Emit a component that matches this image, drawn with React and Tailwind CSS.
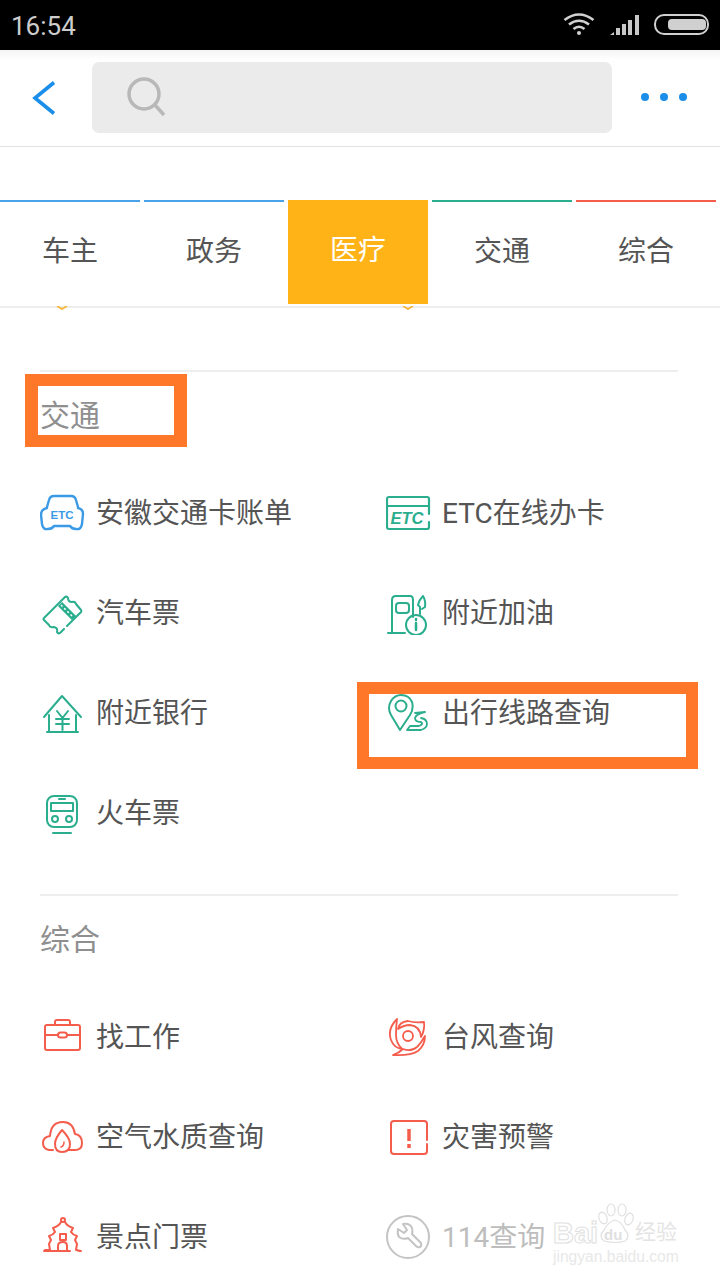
import React from "react";

const font = { fontFamily: '"Roboto","Noto Sans CJK SC",sans-serif' };

function I({ children, c, w = 2 }) {
  return (
    <svg width="46" height="46" viewBox="0 0 46 46" fill="none" stroke={c} strokeWidth={w} strokeLinecap="round" strokeLinejoin="round" className="shrink-0">
      {children}
    </svg>
  );
}

const BLUE = "#3a9ae6", GREEN = "#2bae8e", RED = "#f45d4c", GRAY = "#c4c4c4";

const CarIcon = () => (
  <I c={BLUE} w={2.4}>
    <path d="M7 18 L9 11 Q10 7 14 7 H31 Q35 7 36 11 L38 18 M38 19 Q43 20 43 25 L42 35 Q41 41 36 40 Q32 40 30 37 H14 Q12 40 8 40 Q3 41 2 35 L1 26 Q1 20 7 19" />
    <text x="22" y="30" textAnchor="middle" fontSize="11.5" fontWeight="700" fill={BLUE} stroke="none" fontFamily="Liberation Sans">ETC</text>
  </I>
);
const TicketIcon = () => (
  <I c={GREEN}>
    <path d="M27 37 L40 24 Q42 23 41 21 L36 15 Q35 12 32 13 Q28 13 28 9 Q27 7 25 8 L4 29 Q3 30 4 31 L9 36 Q10 39 14 38 Q18 39 17 43 Q18 45 20 44 L24 40" />
    <path d="M20 15 L34 29" strokeWidth="6" strokeLinecap="butt" />
    <path d="M21 16 L33 28" stroke="#fff" strokeWidth="1.5" strokeLinecap="butt" strokeDasharray="2 2.5" />
  </I>
);
const HouseIcon = () => (
  <I c={GREEN}>
    <path d="M4 28 L22 7 L41 28 M9 26 V42 M36 26 V42 M7 43 H38" />
    <path d="M17 22 L22.5 29 L28 22 M16 30 H29 M16 35 H29 M22.5 29 V41" />
  </I>
);
const TrainIcon = () => (
  <I c={GREEN}>
    <rect x="7" y="7" width="30" height="31" rx="7" />
    <rect x="11" y="14" width="22" height="8" />
    <path d="M19 10 H25 M13 44 H31" />
    <circle cx="15" cy="30" r="3" />
    <circle cx="29" cy="30" r="3" />
  </I>
);
const CardIcon = () => (
  <I c={GREEN} w={2.2}>
    <path d="M43 33 V38 Q43 40 41 40 H3 Q1 40 1 38 V10 Q1 8 3 8 H41 Q43 8 43 10 V25 M1 17 H43" />
    <text x="21" y="34.5" textAnchor="middle" fontSize="16.5" fontWeight="700" fontStyle="italic" fill={GREEN} stroke="none" fontFamily="Liberation Sans">ETC</text>
  </I>
);
const GasIcon = () => (
  <I c={GREEN}>
    <path d="M6 44 V11 Q6 7 10 7 H24 Q27 7 27 11 V28 M2 44 H19" />
    <rect x="10" y="14" width="13" height="10" rx="3" />
    <circle cx="30" cy="36" r="10" />
    <path d="M30 34 V41" strokeWidth="2.5" />
    <path d="M30 30 V31" strokeWidth="2.5" />
    <path d="M34 25 V18 L32 16 Q33 11 37 7 Q40 12 39 18 L36 20" />
  </I>
);
const MapIcon = () => (
  <I c={GREEN}>
    <path d="M14 41 L5 26 Q1 19 5 12 Q9 6 15 6 Q23 6 26 13 Q28 20 24 26 L14 41 Z" />
    <circle cx="15" cy="17" r="5.5" />
    <path d="M29 24 L39 23 Q30 25 29 29 Q29 33 35 33 Q38 35 33 37 L24 37 L21 41 H35 Q41 39 41 35 Q41 30 35 29" strokeWidth="1.8" />
  </I>
);
const CaseIcon = () => (
  <I c={RED}>
    <rect x="5" y="12" width="35" height="25" rx="2" />
    <path d="M15 12 V9 Q15 7 17 7 H28 Q30 7 30 9 V12 M5 22 H18 M27 22 H40" />
    <rect x="18" y="19.5" width="9" height="5" rx="2.5" />
  </I>
);
const CloudIcon = () => (
  <I c={RED}>
    <path d="M13 37 H9 Q3 36 3 30 Q3 24 10 23 Q11 9 23 9 Q33 9 35 21 Q42 22 42 30 Q42 37 35 37 H28" />
    <path d="M22 17 Q30 25 30 31 Q30 39 22 39 Q15 39 15 31 Q15 25 22 17 Z" />
    <path d="M24 29 Q24 33 21 34" strokeWidth="1.5" />
  </I>
);
const TempleIcon = () => (
  <I c={RED}>
    <circle cx="23" cy="7" r="2" />
    <path d="M21 9 Q19 13 13 15 L15 19 Q13 22 9 23 L11 27 L9 31 L10 37 H5 M25 9 Q27 13 33 15 L31 19 Q33 22 37 23 L35 27 L37 31 L36 37 L41 38 H38 M4 38 H30" />
    <rect x="20" y="21" width="6" height="6" />
    <path d="M18 38 V33 Q18 29 23 29 Q27 29 27 33 V38" />
  </I>
);
const TyphoonIcon = () => (
  <I c={RED} w={1.8}>
    <circle cx="22" cy="23" r="5" />
    <path d="M11 6 Q1 16 5 27 Q8 35 16 36 Q10 30 10 22 Q10 14 11 6 Z" />
    <path d="M38 9 Q28 10 22 8 Q13 9 12 16 Q18 12 24 12 Q34 13 35 24 Q39 17 38 9 Z" />
    <path d="M39 23 Q39 32 32 38 Q24 43 7 42 Q13 40 17 36 Q25 39 31 34 Q35 30 39 23 Z" />
  </I>
);
const AlertIcon = () => (
  <I c={RED}>
    <path d="M41 31 V38 Q41 41 38 41 H8 Q5 41 5 38 V11 Q5 8 8 8 H38 Q41 8 41 11 V27" />
    <path d="M23 16 V28" strokeWidth="3.5" strokeLinecap="butt" />
    <path d="M23 31 V35" strokeWidth="3.5" strokeLinecap="butt" />
  </I>
);
const WrenchIcon = () => (
  <I c={GRAY}>
    <circle cx="22" cy="24" r="21" />
    <path d="M12 16 L18 20 L21 17 L17 11 Q24 10 26 15 Q27 19 26 21 L35 30 Q36 33 34 34 Q32 35 30 33 L22 25 Q17 27 13 24 Q11 21 12 16 Z" />
  </I>
);

const Row = ({ icon, label, muted }) => (
  <div className="h-[100px] flex items-center">
    {icon}
    <span className={`ml-[10px] text-[28px] whitespace-nowrap leading-none mt-[3px] ${muted ? "text-[#bdbdbd]" : "text-[#555555]"}`}>{label}</span>
  </div>
);

const Section = ({ title, rows, className = "" }) => (
  <section className={`mx-[40px] w-[638px] border-t-2 border-[#eeeeee] ${className}`}>
    <h2 className="h-[90px] pt-[27px] text-[30px] leading-[34px] font-normal text-[#8f8f8f]">{title}</h2>
    <div className="grid grid-cols-[346px_1fr]">
      {rows.map((r) => (
        <Row key={r.label} {...r} />
      ))}
    </div>
  </section>
);

const tabs = [
  { t: "车主", c: "border-[#4aa3e8]" },
  { t: "政务", c: "border-[#4aa3e8]" },
  { t: "医疗", active: true },
  { t: "交通", c: "border-[#2bae8e]" },
  { t: "综合", c: "border-[#f45d4c]" },
];

export default function App() {
  return (
    <div style={font} className="relative w-[720px] h-[1280px] overflow-hidden bg-white">
      {/* status bar */}
      <div className="h-[50px] bg-black flex items-center pl-[11px] pr-[11px]">
        <span className="text-[26px] leading-none text-[#cccccc] mt-[1px]">16:54</span>
        <div className="ml-auto flex items-center">
          <svg width="32" height="24" viewBox="0 0 32 24" fill="none" stroke="#d0d0d0" strokeWidth="2.6" className="-mt-[3px]">
            <path d="M1.5 8 Q16 -3 30.5 8" />
            <path d="M6 12.5 Q16 5 26 12.5" />
            <path d="M10.5 17 Q16 12.5 21.5 17" />
            <circle cx="16" cy="21" r="2" fill="#d0d0d0" stroke="none" />
          </svg>
          <svg width="32" height="22" viewBox="0 0 32 22" fill="#c8c8c8" className="ml-[14px]">
            <path d="M1 21 L5 18 V21 Z" />
            <rect x="7" y="14" width="4" height="7" />
            <rect x="13" y="10" width="4" height="11" />
            <rect x="19" y="6" width="4" height="15" />
            <rect x="26" y="1" width="4" height="20" />
          </svg>
          <div className="ml-[13px] w-[55px] h-[21px] rounded-[10px] border-2 border-[#d0d0d0] p-[3px] -mt-[1px]">
            <div className="w-[38px] h-[11px] ml-[9px] rounded-[4px] bg-[#d0d0d0]" />
          </div>
        </div>
      </div>

      {/* header */}
      <header className="h-[97px] border-b border-[#e2e2e2] flex items-center bg-gradient-to-b from-[#f4f4f4] to-white to-[10px] pb-[2px]">
        <svg width="24" height="34" viewBox="0 0 24 34" fill="none" stroke="#1a8ee8" strokeWidth="3.6" className="ml-[32px] mt-[2px]">
          <path d="M22 1.5 L3 17 L22 32.5" />
        </svg>
        <div className="ml-[36px] w-[520px] h-[71px] bg-[#ebebeb] rounded-[7px] flex items-center pl-[35px]">
          <svg width="40" height="40" viewBox="0 0 40 40" fill="none" stroke="#b8b8b8" strokeWidth="3.5">
            <circle cx="17" cy="17" r="15" />
            <path d="M28 28 L37 38" />
          </svg>
        </div>
        <div className="ml-[29px] flex gap-[11px]">
          <span className="w-[8px] h-[8px] rounded-full bg-[#1a8ee8]" />
          <span className="w-[8px] h-[8px] rounded-full bg-[#1a8ee8]" />
          <span className="w-[8px] h-[8px] rounded-full bg-[#1a8ee8]" />
        </div>
      </header>

      {/* tabs */}
      <nav className="mt-[53px] flex gap-[4px]">
        {tabs.map((t) =>
          t.active ? (
            <div key={t.t} className="w-[140px] h-[104px] pb-[2px] bg-[#ffb316] text-white text-[28px] flex items-center justify-center">{t.t}</div>
          ) : (
            <div key={t.t} className={`w-[140px] h-[104px] pb-[2px] border-t-2 ${t.c} text-[#555555] text-[28px] flex items-center justify-center`}>{t.t}</div>
          )
        )}
      </nav>
      <div className="mt-[2px] h-[2px] bg-[#eeeeee]" />

      {/* clipped yellow icon remnants */}
      <svg width="12" height="4" viewBox="0 0 12 4" fill="none" stroke="#f5b942" strokeWidth="2" className="absolute left-[56px] top-[306px]">
        <path d="M1 0 L6 3 L11 0" />
      </svg>
      <svg width="12" height="4" viewBox="0 0 12 4" fill="none" stroke="#f5b942" strokeWidth="2" className="absolute left-[402px] top-[306px]">
        <path d="M1 0 L6 3 L11 0" />
      </svg>

      <div className="mt-[62px]">
        <Section
          title="交通"
          rows={[
            { icon: <CarIcon />, label: "安徽交通卡账单" },
            { icon: <CardIcon />, label: "ETC在线办卡" },
            { icon: <TicketIcon />, label: "汽车票" },
            { icon: <GasIcon />, label: "附近加油" },
            { icon: <HouseIcon />, label: "附近银行" },
            { icon: <MapIcon />, label: "出行线路查询" },
            { icon: <TrainIcon />, label: "火车票" },
          ]}
        />
        <Section
          className="mt-[32px]"
          title="综合"
          rows={[
            { icon: <CaseIcon />, label: "找工作" },
            { icon: <TyphoonIcon />, label: "台风查询" },
            { icon: <CloudIcon />, label: "空气水质查询" },
            { icon: <AlertIcon />, label: "灾害预警" },
            { icon: <TempleIcon />, label: "景点门票" },
            { icon: <WrenchIcon />, label: "114查询", muted: true },
          ]}
        />
      </div>

      {/* annotation boxes */}
      <div className="absolute left-[25px] top-[374px] w-[162px] h-[73px] border-[#ff7728] border-t-[12px] border-b-[12px] border-l-[13px] border-r-[13px]" />
      <div className="absolute left-[357px] top-[682px] w-[341px] h-[87px] border-[#ff7728] border-t-[12px] border-b-[12px] border-l-[12px] border-r-[12px]" />

      {/* watermark */}
      <div className="absolute left-[553px] top-[1203px] w-[130px] h-[62px]">
        <span className="absolute left-0 top-[13px] text-[29px] leading-[34px] font-bold text-white [-webkit-text-stroke:1px_#e0e0e0]" style={{ fontFamily: '"Liberation Sans",sans-serif' }}>Bai</span>
        <svg width="40" height="42" viewBox="0 0 40 42" fill="none" stroke="#e0e0e0" strokeWidth="1.2" className="absolute left-[42px] top-0">
          <ellipse cx="8" cy="15" rx="4" ry="6" transform="rotate(-20 8 15)" />
          <ellipse cx="16" cy="7" rx="4" ry="6" />
          <ellipse cx="27" cy="7" rx="4" ry="6" />
          <ellipse cx="34" cy="16" rx="4" ry="6" transform="rotate(20 34 16)" />
          <path d="M20 17 Q27 19 30 27 Q36 33 30 38 Q20 41 9 38 Q3 33 9 27 Q13 19 20 17 Z" fill="#fff" />
        </svg>
        <span className="absolute left-[51px] top-[24px] text-[15px] leading-[16px] font-bold text-[#e0e0e0]" style={{ fontFamily: '"Liberation Sans",sans-serif' }}>du</span>
        <span className="absolute left-[82px] top-[17px] text-[21px] leading-[24px] text-[#e4e4e4] whitespace-nowrap">经验</span>
        <span className="absolute left-0 top-[44px] text-[15.6px] leading-[20px] text-[#e8e8e8] whitespace-nowrap" style={{ fontFamily: '"Liberation Sans",sans-serif' }}>jingyan.baidu.com</span>
      </div>
    </div>
  );
}
